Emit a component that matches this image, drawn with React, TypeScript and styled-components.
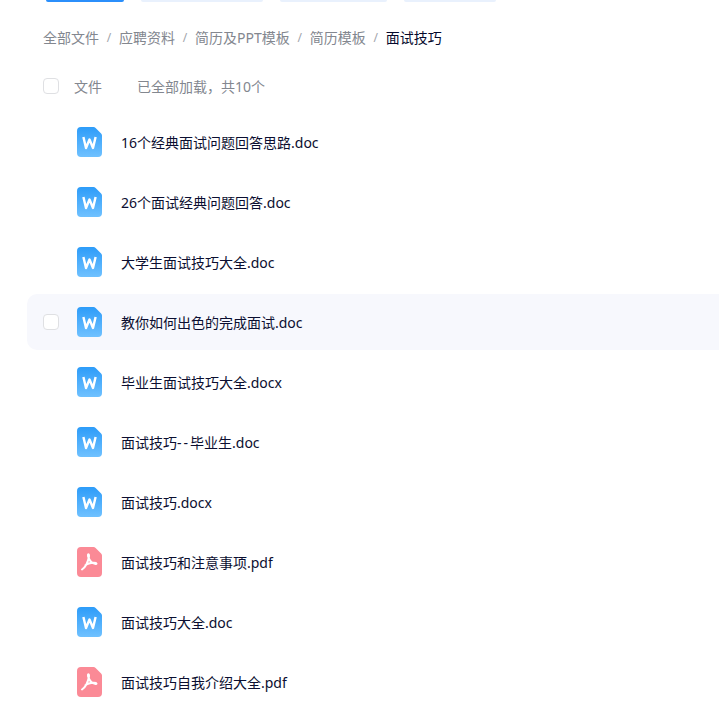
import React from 'react'
import styled, { createGlobalStyle } from 'styled-components'

const GlobalStyle = createGlobalStyle`
  html, body {
    margin: 0;
    padding: 0;
    background: #fff;
    overflow: hidden;
  }
  body {
    font-family: "Noto Sans", "Noto Sans CJK SC", sans-serif;
  }
`

const Page = styled.div`
  width: 719px;
  height: 704px;
  overflow: hidden;
`

const TabStrip = styled.div`
  display: flex;
  gap: 17px;
  height: 2px;
  padding-left: 46px;
  overflow: hidden;
`

const Tab = styled.div<{ $width: number; $active?: boolean }>`
  width: ${p => p.$width}px;
  height: 2px;
  border-radius: 0 0 8px 8px;
  background: ${p => (p.$active ? '#2b8ffb' : '#e9f1fd')};
`

const Breadcrumbs = styled.nav`
  display: flex;
  align-items: center;
  height: 20px;
  margin: 25px 0 0 43px;
  font-size: 14px;
  color: #83878f;
`

const Crumb = styled.span<{ $current?: boolean }>`
  color: ${p => (p.$current ? '#05082c' : '#83878f')};
`

const Slash = styled.span`
  width: 20px;
  text-align: center;
  font-size: 12px;
  color: #a2a5ab;
`

const Header = styled.div`
  display: flex;
  align-items: center;
  height: 24px;
  margin: 27px 0 0 43px;
  font-size: 14px;
  color: #83878f;
`

const Check = styled.span`
  display: block;
  flex: none;
  box-sizing: border-box;
  width: 16px;
  height: 16px;
  background: #fff;
  border: 1px solid #dfe0e3;
  border-radius: 4px;
`

const HeaderName = styled.span`
  margin-left: 15px;
  width: 63px;
`

const List = styled.div`
  margin-top: 16px;
`

const Row = styled.div<{ $hover?: boolean }>`
  display: flex;
  align-items: center;
  box-sizing: border-box;
  height: 56px;
  margin: 2px 0 4px 27px;
  padding-left: 16px;
  border-radius: 10px 0 0 10px;
  background: ${p => (p.$hover ? '#f7f8fd' : 'transparent')};
`

const CheckSlot = styled.div`
  width: 34px;
  flex: none;
`

const FileName = styled.span`
  margin-left: 19px;
  font-size: 14px;
  color: #0b0e30;
`

const Dash = styled.span`
  letter-spacing: 2px;
`

const DocGlyph = styled.svg`
  display: block;
  flex: none;
`

const sheetPath =
  'M4 0H16.5C17.3 0 18 .3 18.6 .9L24.1 6.4C24.7 7 25 7.7 25 8.5V26a4 4 0 0 1-4 4H4a4 4 0 0 1-4-4V4a4 4 0 0 1 4-4Z'

function WordIcon() {
  return (
    <DocGlyph width="25" height="30" viewBox="0 0 25 30">
      <defs>
        <linearGradient id="wordFill" x1="0" y1="0" x2="0" y2="1">
          <stop offset="0" stopColor="#2d9cf9" />
          <stop offset="1" stopColor="#6fc1ff" />
        </linearGradient>
      </defs>
      <path d={sheetPath} fill="url(#wordFill)" />
      <path
        d="M6.4 10 9 21 12.5 12.5 16 21 18.6 10"
        fill="none"
        stroke="#fff"
        strokeWidth="2.4"
        strokeLinejoin="round"
      />
    </DocGlyph>
  )
}

function PdfIcon() {
  return (
    <DocGlyph width="25" height="30" viewBox="0 0 25 30">
      <path d={sheetPath} fill="#fb8a96" />
      <path
        d="M5 22.5C8 20.5 11 15 12 9.5C12.2 7.5 11.5 6.8 11 7.5C10.5 9 12.5 14 15 15.5C17 16.5 19.5 17.5 19.5 16.5C19 15.2 13 15.5 8.5 18"
        fill="none"
        stroke="#fff"
        strokeWidth="2"
        strokeLinecap="round"
        strokeLinejoin="round"
      />
    </DocGlyph>
  )
}

const tabs = [
  { width: 78, active: true },
  { width: 122 },
  { width: 107 },
  { width: 92 }
]

const crumbs = ['全部文件', '应聘资料', '简历及PPT模板', '简历模板']

const files = [
  { name: '16个经典面试问题回答思路.doc', type: 'word' },
  { name: '26个面试经典问题回答.doc', type: 'word' },
  { name: '大学生面试技巧大全.doc', type: 'word' },
  { name: '教你如何出色的完成面试.doc', type: 'word', hover: true },
  { name: '毕业生面试技巧大全.docx', type: 'word' },
  { name: '面试技巧--毕业生.doc', type: 'word' },
  { name: '面试技巧.docx', type: 'word' },
  { name: '面试技巧和注意事项.pdf', type: 'pdf' },
  { name: '面试技巧大全.doc', type: 'word' },
  { name: '面试技巧自我介绍大全.pdf', type: 'pdf' }
]

export default function App() {
  return (
    <Page>
      <GlobalStyle />
      <TabStrip>
        {tabs.map((tab, i) => (
          <Tab key={i} $width={tab.width} $active={tab.active} />
        ))}
      </TabStrip>
      <Breadcrumbs>
        {crumbs.map(crumb => (
          <React.Fragment key={crumb}>
            <Crumb>{crumb}</Crumb>
            <Slash>/</Slash>
          </React.Fragment>
        ))}
        <Crumb $current>面试技巧</Crumb>
      </Breadcrumbs>
      <Header>
        <Check />
        <HeaderName>文件</HeaderName>
        <span>已全部加载，共10个</span>
      </Header>
      <List>
        {files.map(file => (
          <Row key={file.name} $hover={file.hover}>
            <CheckSlot>{file.hover && <Check />}</CheckSlot>
            {file.type === 'pdf' ? <PdfIcon /> : <WordIcon />}
            <FileName>
              {file.name.split(/(--)/).map((part, i) =>
                part === '--' ? <Dash key={i}>{part}</Dash> : part
              )}
            </FileName>
          </Row>
        ))}
      </List>
    </Page>
  )
}
